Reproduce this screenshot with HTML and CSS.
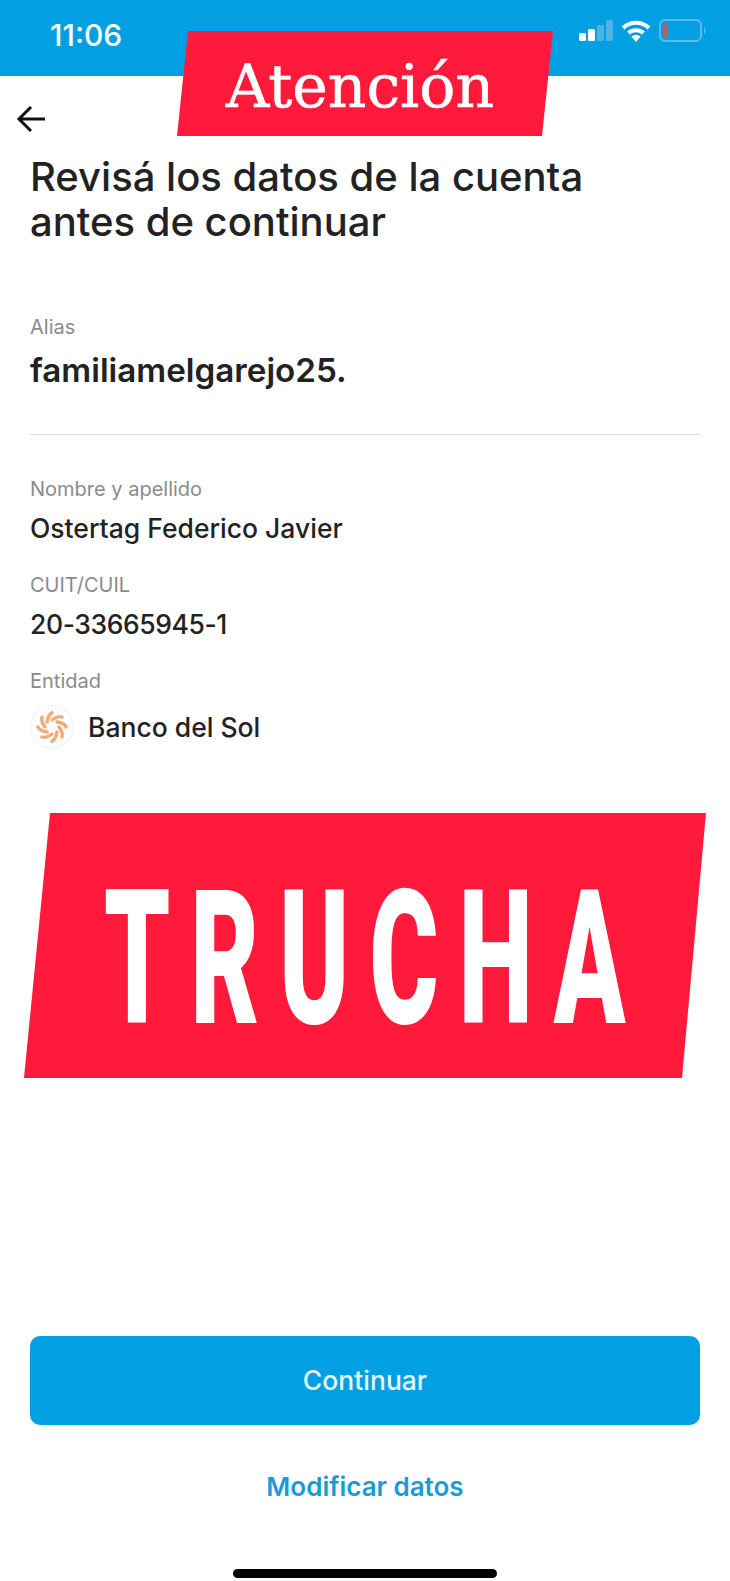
FILE: index.html
```html
<!DOCTYPE html>
<html lang="es">
<head>
    <meta charset="UTF-8">
    <title>Revisá los datos de la cuenta</title>
    <link rel="stylesheet" href="styles.css">
</head>
<body>
    <div class="phone">
        <div class="status-bar">
            <span class="clock">11:06</span>
            <div class="status-icons">
                <svg class="signal" width="34" height="22" viewBox="0 0 34 22">
                    <rect x="0" y="13" width="7" height="8" rx="1.5" fill="#fff"/>
                    <rect x="9" y="9" width="7" height="12" rx="1.5" fill="#fff"/>
                    <rect x="18" y="5" width="7" height="16" rx="1.5" fill="#4db4e6"/>
                    <rect x="27" y="0" width="7" height="21" rx="1.5" fill="#4db4e6"/>
                </svg>
                <svg class="wifi" width="30" height="22" viewBox="0 0 30 22">
                    <path d="M2 8 A19 19 0 0 1 28 8" fill="none" stroke="#fff" stroke-width="4"/>
                    <path d="M7.5 13 A11.5 11.5 0 0 1 22.500 13" fill="none" stroke="#fff" stroke-width="4"/>
                    <path d="M15 22 L10.500 16.500 A7 7 0 0 1 19.500 16.500 Z" fill="#fff"/>
                </svg>
                <svg class="battery" width="48" height="24" viewBox="0 0 48 24">
                    <rect x="1" y="1" width="41" height="21" rx="5" fill="none" stroke="#5bbcec" stroke-width="2"/>
                    <rect x="4" y="5" width="4" height="13" rx="1" fill="#d9534f"/>
                    <path d="M45 8 C47 9 47 14 45 15 Z" fill="#5bbcec"/>
                </svg>
            </div>
        </div>

        <div class="content">
            <svg class="back" width="32" height="30" viewBox="0 0 32 30">
                <path d="M29 15 H4 M15 3 L3 15 L15 27" fill="none" stroke="#111" stroke-width="3"/>
            </svg>
            <h1>Revisá los datos de la cuenta<br>antes de continuar</h1>

            <div class="alias">
                <p class="label">Alias</p>
                <p class="alias-value">familiamelgarejo25.</p>
            </div>

            <div class="details">
                <div class="field">
                    <p class="label">Nombre y apellido</p>
                    <p class="value">Ostertag Federico Javier</p>
                </div>
                <div class="field">
                    <p class="label">CUIT/CUIL</p>
                    <p class="value value-number">20-33665945-1</p>
                </div>
                <div class="field">
                    <p class="label">Entidad</p>
                    <div class="bank">
                        <span class="bank-logo">
                            <svg width="32" height="32" viewBox="-16 -16 32 32">
                                <g fill="none" stroke="#f2ab78" stroke-width="3.4" stroke-linecap="round">
                                    <path d="M0 -7 C4 -10 7 -11 10 -10"/>
                                    <path d="M0 -7 C4 -10 7 -11 10 -10" transform="rotate(45)"/>
                                    <path d="M0 -7 C4 -10 7 -11 10 -10" transform="rotate(90)"/>
                                    <path d="M0 -7 C4 -10 7 -11 10 -10" transform="rotate(135)"/>
                                    <path d="M0 -7 C4 -10 7 -11 10 -10" transform="rotate(180)"/>
                                    <path d="M0 -7 C4 -10 7 -11 10 -10" transform="rotate(225)"/>
                                    <path d="M0 -7 C4 -10 7 -11 10 -10" transform="rotate(270)"/>
                                    <path d="M0 -7 C4 -10 7 -11 10 -10" transform="rotate(315)"/>
                                </g>
                            </svg>
                        </span>
                        <span class="value">Banco del Sol</span>
                    </div>
                </div>
            </div>
        </div>

        <div class="actions">
            <button class="btn-primary">Continuar</button>
            <a class="btn-link" href="#">Modificar datos</a>
        </div>
        <div class="home-indicator"></div>

        <div class="tag-top"><span>Atención</span></div>
        <div class="tag-main"><span>TRUCHA</span></div>
    </div>
</body>
</html>
```

FILE: styles.css
```css
* {
    box-sizing: border-box;
}
html, body {
    margin: 0;
    padding: 0;
}
body {
    font-family: 'Inter', sans-serif;
    background-color: #fff;
    color: #222;
}
p, h1 {
    margin: 0;
}
.phone {
    position: relative;
    width: 730px;
    height: 1581px;
    display: flex;
    flex-direction: column;
    overflow: hidden;
}
.status-bar {
    height: 76px;
    flex: none;
    background-color: #039fe3;
    display: flex;
    justify-content: space-between;
    padding: 18px 23px 0 50px;
    color: #fff;
}
.clock {
    font-size: 30px;
    font-weight: 500;
    line-height: 34px;
}
.status-icons {
    display: flex;
    gap: 8px;
    height: 26px;
    align-items: center;
}
.content {
    flex: 1;
    padding: 28px 30px 0;
}
.back {
    display: block;
    margin-left: -14px;
}
h1 {
    margin-top: 20px;
    font-size: 40px;
    font-weight: 500;
    line-height: 45px;
    color: #222;
}
.alias {
    margin-top: 71px;
    padding-bottom: 46px;
    border-bottom: 1px solid #ddd;
}
.label {
    font-size: 20px;
    line-height: 24px;
    color: #8b8b8b;
}
.alias-value {
    margin-top: 13px;
    font-size: 33.2px;
    font-weight: 600;
    line-height: 36px;
}
.details {
    margin-top: 42px;
    display: flex;
    flex-direction: column;
    gap: 29px;
}
.value {
    font-size: 26.5px;
    font-weight: 500;
    line-height: 32px;
}
.value-number {
    letter-spacing: -0.4px;
}
.field .value {
    margin-top: 11px;
}
.bank {
    margin-top: 12px;
    display: flex;
    align-items: center;
    gap: 14px;
}
.bank .value {
    margin-top: 0;
}
.bank-logo {
    width: 44px;
    height: 44px;
    border-radius: 50%;
    border: 1px solid #eee;
    display: flex;
    align-items: center;
    justify-content: center;
}
.actions {
    flex: none;
    padding: 0 30px;
    display: flex;
    flex-direction: column;
    align-items: center;
}
.btn-primary {
    width: 100%;
    height: 89px;
    padding-bottom: 2px;
    background-color: #039fe3;
    color: #e6f6fd;
    border: none;
    border-radius: 10px;
    font-family: 'Inter', sans-serif;
    font-size: 26.5px;
    font-weight: 500;
}
.btn-link {
    margin-top: 46px;
    font-size: 26px;
    font-weight: 600;
    line-height: 32px;
    color: #1b9ad6;
    text-decoration: none;
}
.home-indicator {
    flex: none;
    width: 264px;
    height: 9px;
    margin: 66px auto 3px;
    border-radius: 5px;
    background-color: #000;
}
.tag-top, .tag-main {
    position: absolute;
    background-color: #ff1a3c;
    color: #fff;
    display: flex;
    align-items: center;
    justify-content: center;
}
.tag-top {
    left: 177px;
    top: 31px;
    width: 376px;
    height: 105px;
    padding: 4px 10px 0 0;
    clip-path: polygon(11px 0, 100% 0, 365px 100%, 0 100%);
    font-family: 'DejaVu Serif', serif;
    font-size: 60px;
    -webkit-text-stroke: 0.6px #fff;
}
.tag-main {
    left: 24px;
    top: 813px;
    width: 682px;
    height: 265px;
    padding-top: 26px;
    clip-path: polygon(26px 0, 100% 0, 658px 100%, 0 100%);
    font-family: 'Roboto', sans-serif;
    font-weight: 900;
    font-size: 188px;
}
.tag-main span {
    display: block;
    padding-left: 36px;
    letter-spacing: 36px;
    transform: scaleX(0.56);
}
```
